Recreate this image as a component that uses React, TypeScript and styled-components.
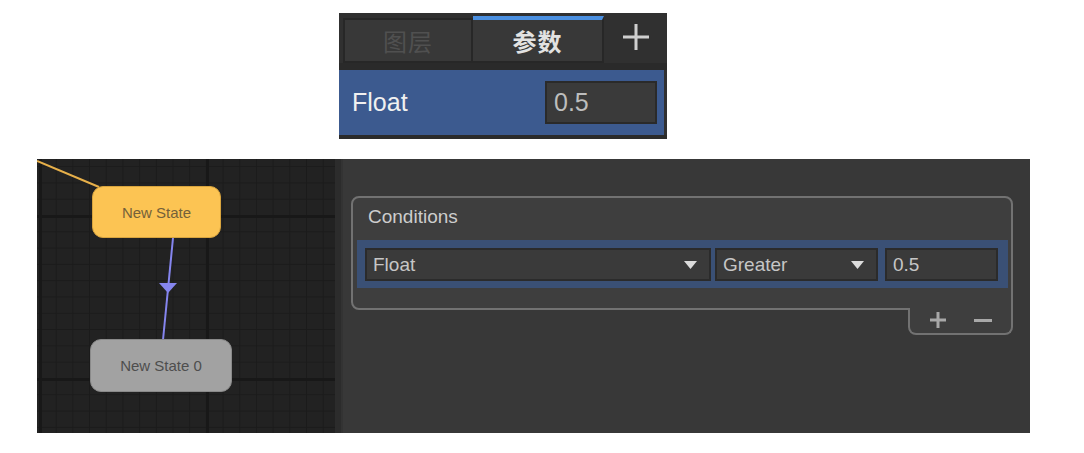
import React from "react";
import styled, { createGlobalStyle } from "styled-components";

const GlobalStyle = createGlobalStyle`
  html, body { margin: 0; padding: 0; background: #ffffff; }
  body { font-family: "Liberation Sans", Arial, sans-serif; }
  * { box-sizing: border-box; }
`;

const Page = styled.div`
  width: 1084px;
  height: 453px;
  display: flex;
  flex-direction: column;
  overflow: hidden;
`;

/* ---------- Top parameters panel ---------- */
const ParamsPanel = styled.div`
  margin: 13px 0 0 339px;
  width: 328px;
  height: 126px;
  background: #303030;
  display: flex;
  flex-direction: column;
`;

const TabRow = styled.div`
  height: 50px;
  display: flex;
  align-items: flex-end;
  padding-left: 4px;
`;

const Tab = styled.div<{ $active?: boolean }>`
  width: ${(p) => (p.$active ? 131 : 130)}px;
  height: ${(p) => (p.$active ? 47 : 45)}px;
  background: #383838;
  border: 2px solid #272727;
  border-top: ${(p) => (p.$active ? "4px solid #4a8fe0" : "2px solid #272727")};
  border-left-width: ${(p) => (p.$active ? 0 : 2)}px;
  display: flex;
  align-items: center;
  justify-content: center;
  font-family: "Noto Sans CJK SC", "Liberation Sans", sans-serif;
  font-size: 24px;
  font-weight: ${(p) => (p.$active ? 700 : 400)};
  color: ${(p) => (p.$active ? "#e2e2e2" : "#505050")};
  letter-spacing: 1px;
`;

const AddTab = styled.div`
  flex: 1;
  height: 50px;
  display: flex;
  align-items: center;
  justify-content: center;
  padding-bottom: 2px;
`;

const TabGap = styled.div`
  height: 7px;
  background: #2a2a2a;
`;

const ParamRow = styled.div`
  height: 65px;
  margin-right: 3px;
  background: #3c5a8f;
  display: flex;
  align-items: center;
  justify-content: space-between;
  padding: 0 7px 0 13px;
`;

const ParamName = styled.span`
  font-size: 25px;
  color: #f0f0f0;
`;

const ParamValue = styled.div`
  width: 112px;
  height: 43px;
  background: #3a3a3a;
  border: 2px solid #2a2a2a;
  display: flex;
  align-items: center;
  padding-left: 7px;
  font-size: 25px;
  color: #bdbdbd;
`;

const PanelFoot = styled.div`
  flex: 1;
  background: #2b2b2b;
`;

/* ---------- Bottom editor ---------- */
const Editor = styled.div`
  margin: 20px 0 0 37px;
  width: 993px;
  height: 274px;
  display: flex;
`;

const Canvas = styled.div`
  position: relative;
  width: 298px;
  height: 100%;
  overflow: hidden;
  background-color: #222222;
  background-image:
    linear-gradient(to right, #181818 0, #181818 3px, transparent 3px),
    linear-gradient(to bottom, #181818 0, #181818 3px, transparent 3px),
    linear-gradient(to right, #1b1b1b 0, #1b1b1b 1px, transparent 1px),
    linear-gradient(to bottom, #1b1b1b 0, #1b1b1b 1px, transparent 1px);
  background-size: 167px 163px, 167px 163px, 16.7px 16.3px, 16.7px 16.3px;
  background-position: 2px 0, 0 56px, 2px 0, 0 56px;
`;

const Edges = styled.svg`
  position: absolute;
  left: 0;
  top: 0;
  width: 100%;
  height: 100%;
`;

const StateNode = styled.div<{ $kind: "entry" | "normal" }>`
  position: absolute;
  display: flex;
  align-items: center;
  justify-content: center;
  border-radius: 11px;
  font-size: 15px;
  background: ${(p) => (p.$kind === "entry" ? "#fcc453" : "#a2a2a2")};
  border: 1px solid ${(p) => (p.$kind === "entry" ? "#d8a43e" : "#8a8a8a")};
  color: ${(p) => (p.$kind === "entry" ? "#74613a" : "#4e4e4e")};
`;

const Divider = styled.div`
  width: 8px;
  height: 100%;
  background: #2c2c2c;
  border-right: 2px solid #333333;
`;

const Inspector = styled.div`
  flex: 1;
  height: 100%;
  background: #383838;
  padding: 37px 17px 0 8px;
`;

const ConditionsGroup = styled.div`
  display: flex;
  flex-direction: column;
`;

const ConditionsBox = styled.div`
  height: 114px;
  background: #3e3e3e;
  border: 2px solid #727272;
  border-radius: 8px 8px 0 8px;
  display: flex;
  flex-direction: column;
`;

const BoxTitle = styled.div`
  height: 42px;
  padding: 8px 0 0 15px;
  line-height: 22px;
  font-size: 19px;
  color: #cdcdcd;
`;

const ConditionRow = styled.div`
  height: 48px;
  margin: 0 3px 0 4px;
  background: #3a5075;
  display: flex;
  align-items: center;
  padding: 1px 10px 0 8px;
`;

const Select = styled.div<{ $w: number; $gap: number }>`
  width: ${(p) => p.$w}px;
  margin-right: ${(p) => p.$gap}px;
  height: 33px;
  background: #3a3a3a;
  border: 2px solid #2b2b2b;
  display: flex;
  align-items: center;
  justify-content: space-between;
  padding: 0 12px 0 6px;
  font-size: 19px;
  color: #c6c6c6;
`;

const ValueField = styled.div`
  flex: 1;
  height: 33px;
  background: #3a3a3a;
  border: 2px solid #2b2b2b;
  display: flex;
  align-items: center;
  padding-left: 6px;
  font-size: 19px;
  color: #c6c6c6;
`;

const BoxFooter = styled.div`
  align-self: flex-end;
  width: 105px;
  height: 27px;
  margin-top: -2px;
  background: #3e3e3e;
  border: 2px solid #727272;
  border-top: none;
  border-radius: 0 0 8px 8px;
  display: flex;
  align-items: center;
  justify-content: space-between;
  padding: 0 19px 2px 20px;
`;

const Caret = () => (
  <svg width="13" height="8" viewBox="0 0 13 8">
    <path d="M0 0 H13 L6.5 8 Z" fill="#dcdcdc" />
  </svg>
);

const PlusIcon = ({ size, stroke, color }: { size: number; stroke: number; color: string }) => (
  <svg width={size} height={size} viewBox={`0 0 ${size} ${size}`}>
    <rect x={(size - stroke) / 2} y={0} width={stroke} height={size} fill={color} />
    <rect x={0} y={(size - stroke) / 2} width={size} height={stroke} fill={color} />
  </svg>
);

const MinusIcon = () => (
  <svg width="18" height="16" viewBox="0 0 18 16">
    <rect x="0" y="7" width="18" height="3" fill="#a8a8a8" />
  </svg>
);

export default function App() {
  return (
    <Page>
      <GlobalStyle />
      <ParamsPanel>
        <TabRow>
          <Tab>图层</Tab>
          <Tab $active>参数</Tab>
          <AddTab>
            <PlusIcon size={26} stroke={3} color="#cfcfcf" />
          </AddTab>
        </TabRow>
        <TabGap />
        <ParamRow>
          <ParamName>Float</ParamName>
          <ParamValue>0.5</ParamValue>
        </ParamRow>
        <PanelFoot />
      </ParamsPanel>

      <Editor>
        <Canvas>
          <Edges viewBox="0 0 298 274">
            <line x1="0" y1="2" x2="62" y2="28" stroke="#e7b04a" strokeWidth="2" />
            <line x1="136" y1="79" x2="126" y2="181" stroke="#8585ee" strokeWidth="2" />
            <path d="M122 124 H140 L131 134 Z" fill="#8585ee" />
          </Edges>
          <StateNode $kind="entry" style={{ left: 55, top: 27, width: 129, height: 52 }}>
            New State
          </StateNode>
          <StateNode $kind="normal" style={{ left: 53, top: 180, width: 142, height: 53 }}>
            New State 0
          </StateNode>
        </Canvas>
        <Divider />
        <Inspector>
          <ConditionsGroup>
            <ConditionsBox>
              <BoxTitle>Conditions</BoxTitle>
              <ConditionRow>
                <Select $w={346} $gap={4}>
                  <span>Float</span>
                  <Caret />
                </Select>
                <Select $w={163} $gap={7}>
                  <span>Greater</span>
                  <Caret />
                </Select>
                <ValueField>0.5</ValueField>
              </ConditionRow>
            </ConditionsBox>
            <BoxFooter>
              <PlusIcon size={16} stroke={3} color="#a8a8a8" />
              <MinusIcon />
            </BoxFooter>
          </ConditionsGroup>
        </Inspector>
      </Editor>
    </Page>
  );
}
